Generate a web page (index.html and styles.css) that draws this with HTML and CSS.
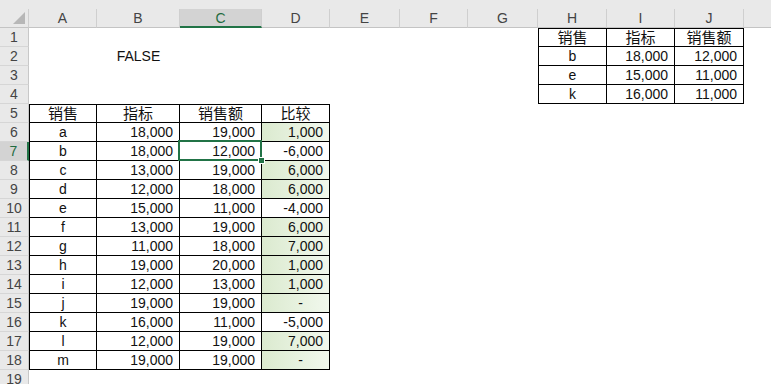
FILE: index.html
```html
<!DOCTYPE html>
<html lang="zh">
<head>
<meta charset="utf-8">
<title>Sheet</title>
<link rel="stylesheet" href="styles.css">
</head>
<body>
<div class="sheet">
  <div class="hdr">
    <div class="corner"><svg width="12" height="12" viewBox="0 0 12 12"><polygon points="12,0 12,12 0,12" fill="#b7b7b7"/></svg></div>
    <div class="ch">A</div><div class="ch">B</div><div class="ch sel">C</div><div class="ch">D</div><div class="ch">E</div><div class="ch">F</div><div class="ch">G</div><div class="ch">H</div><div class="ch">I</div><div class="ch">J</div><div class="ch last"></div>
  </div>

  <div class="row"><div class="rh">1</div><div></div><div></div><div></div><div></div><div></div><div></div><div></div><div class="b t l ctr zh">销售</div><div class="b t ctr zh">指标</div><div class="b t ctr zh">销售额</div><div></div></div>
  <div class="row"><div class="rh">2</div><div></div><div class="ctr">FALSE</div><div></div><div></div><div></div><div></div><div></div><div class="b l ctr">b</div><div class="b num">18,000</div><div class="b num">12,000</div><div></div></div>
  <div class="row"><div class="rh">3</div><div></div><div></div><div></div><div></div><div></div><div></div><div></div><div class="b l ctr">e</div><div class="b num">15,000</div><div class="b num">11,000</div><div></div></div>
  <div class="row"><div class="rh">4</div><div></div><div></div><div></div><div></div><div></div><div></div><div></div><div class="b l ctr">k</div><div class="b num">16,000</div><div class="b num">11,000</div><div></div></div>

  <div class="row"><div class="rh">5</div><div class="b t l ctr zh">销售</div><div class="b t ctr zh">指标</div><div class="b t ctr zh">销售额</div><div class="b t ctr zh">比较</div><div></div><div></div><div></div><div></div><div></div><div></div><div></div></div>
  <div class="row"><div class="rh">6</div><div class="b l ctr">a</div><div class="b num">18,000</div><div class="b num">19,000</div><div class="b num bar">1,000</div><div></div><div></div><div></div><div></div><div></div><div></div><div></div></div>
  <div class="row"><div class="rh cur">7</div><div class="b l ctr">b</div><div class="b num">18,000</div><div class="b num active">12,000<span class="selbox"></span><span class="handle"></span></div><div class="b num">-6,000</div><div></div><div></div><div></div><div></div><div></div><div></div><div></div></div>
  <div class="row"><div class="rh">8</div><div class="b l ctr">c</div><div class="b num">13,000</div><div class="b num">19,000</div><div class="b num bar">6,000</div><div></div><div></div><div></div><div></div><div></div><div></div><div></div></div>
  <div class="row"><div class="rh">9</div><div class="b l ctr">d</div><div class="b num">12,000</div><div class="b num">18,000</div><div class="b num bar">6,000</div><div></div><div></div><div></div><div></div><div></div><div></div><div></div></div>
  <div class="row"><div class="rh">10</div><div class="b l ctr">e</div><div class="b num">15,000</div><div class="b num">11,000</div><div class="b num">-4,000</div><div></div><div></div><div></div><div></div><div></div><div></div><div></div></div>
  <div class="row"><div class="rh">11</div><div class="b l ctr">f</div><div class="b num">13,000</div><div class="b num">19,000</div><div class="b num bar">6,000</div><div></div><div></div><div></div><div></div><div></div><div></div><div></div></div>
  <div class="row"><div class="rh">12</div><div class="b l ctr">g</div><div class="b num">11,000</div><div class="b num">18,000</div><div class="b num bar">7,000</div><div></div><div></div><div></div><div></div><div></div><div></div><div></div></div>
  <div class="row"><div class="rh">13</div><div class="b l ctr">h</div><div class="b num">19,000</div><div class="b num">20,000</div><div class="b num bar">1,000</div><div></div><div></div><div></div><div></div><div></div><div></div><div></div></div>
  <div class="row"><div class="rh">14</div><div class="b l ctr">i</div><div class="b num">12,000</div><div class="b num">13,000</div><div class="b num bar">1,000</div><div></div><div></div><div></div><div></div><div></div><div></div><div></div></div>
  <div class="row"><div class="rh">15</div><div class="b l ctr">j</div><div class="b num">19,000</div><div class="b num">19,000</div><div class="b num bar dash">-</div><div></div><div></div><div></div><div></div><div></div><div></div><div></div></div>
  <div class="row"><div class="rh">16</div><div class="b l ctr">k</div><div class="b num">16,000</div><div class="b num">11,000</div><div class="b num">-5,000</div><div></div><div></div><div></div><div></div><div></div><div></div><div></div></div>
  <div class="row"><div class="rh">17</div><div class="b l ctr">l</div><div class="b num">12,000</div><div class="b num">19,000</div><div class="b num bar">7,000</div><div></div><div></div><div></div><div></div><div></div><div></div><div></div></div>
  <div class="row"><div class="rh">18</div><div class="b l ctr">m</div><div class="b num">19,000</div><div class="b num">19,000</div><div class="b num bar dash">-</div><div></div><div></div><div></div><div></div><div></div><div></div><div></div></div>
  <div class="row"><div class="rh">19</div><div></div><div></div><div></div><div></div><div></div><div></div><div></div><div></div><div></div><div></div><div></div></div>
</div>
</body>
</html>
```

FILE: styles.css
```css
html, body {
  margin: 0;
  padding: 0;
  background: #ffffff;
  overflow: hidden;
}

.sheet {
  --cols: 29px 68px 83px 82px 68px 70px 68px 70px 69px 68px 69px 1fr;
  width: 771px;
  height: 384px;
  overflow: hidden;
  font-family: "Liberation Sans", "Noto Sans CJK SC", sans-serif;
  font-size: 14px;
  color: #111;
}

.hdr {
  display: grid;
  grid-template-columns: var(--cols);
  height: 28px;
  align-items: end;
  background: #e9e9e9;
}

.corner {
  height: 19px;
  box-sizing: border-box;
  border-bottom: 1px solid #c4c4c4;
  border-right: 1px solid #cfcfcf;
  display: flex;
  justify-content: flex-end;
  align-items: flex-end;
  padding: 0 3px 3px 0;
}

.ch {
  height: 19px;
  box-sizing: border-box;
  border-bottom: 1px solid #c4c4c4;
  border-right: 1px solid #cfcfcf;
  text-align: center;
  line-height: 19px;
  color: #444;
  font-size: 14px;
}

.ch.last {
  border-right: none;
}

.ch.sel {
  background: #d3d3d3;
  border-bottom: 2px solid #217346;
  color: #1f6b40;
  line-height: 18px;
}

.row {
  display: grid;
  grid-template-columns: var(--cols);
  height: 19px;
  line-height: 19px;
}

.row > div {
  box-sizing: border-box;
  height: 19px;
  white-space: nowrap;
}

.rh {
  background: #e9e9e9;
  border-bottom: 1px solid #d6d6d6;
  border-right: 1px solid #c8c8c8;
  text-align: center;
  color: #444;
}

.rh.cur {
  background: #d3d3d3;
  border-right: 2px solid #217346;
  color: #1f6b40;
}

.b {
  border-right: 1px solid #000;
  border-bottom: 1px solid #000;
}

.t {
  border-top: 1px solid #000;
  line-height: 17px;
}

.l {
  border-left: 1px solid #000;
}

.ctr {
  text-align: center;
}

.num {
  text-align: right;
  padding-right: 6px;
}

.zh {
  font-size: 15px;
}

.bar {
  background: linear-gradient(to right, #dbeacf, #f1f8ed);
}

.dash {
  padding-right: 26px;
}

.active {
  position: relative;
}

.selbox {
  position: absolute;
  left: -2px;
  top: -2px;
  right: -1px;
  bottom: -1px;
  border: 2px solid #217346;
}

.handle {
  position: absolute;
  right: -4px;
  bottom: -4px;
  width: 5px;
  height: 5px;
  background: #217346;
  border: 1px solid #fff;
}
```
